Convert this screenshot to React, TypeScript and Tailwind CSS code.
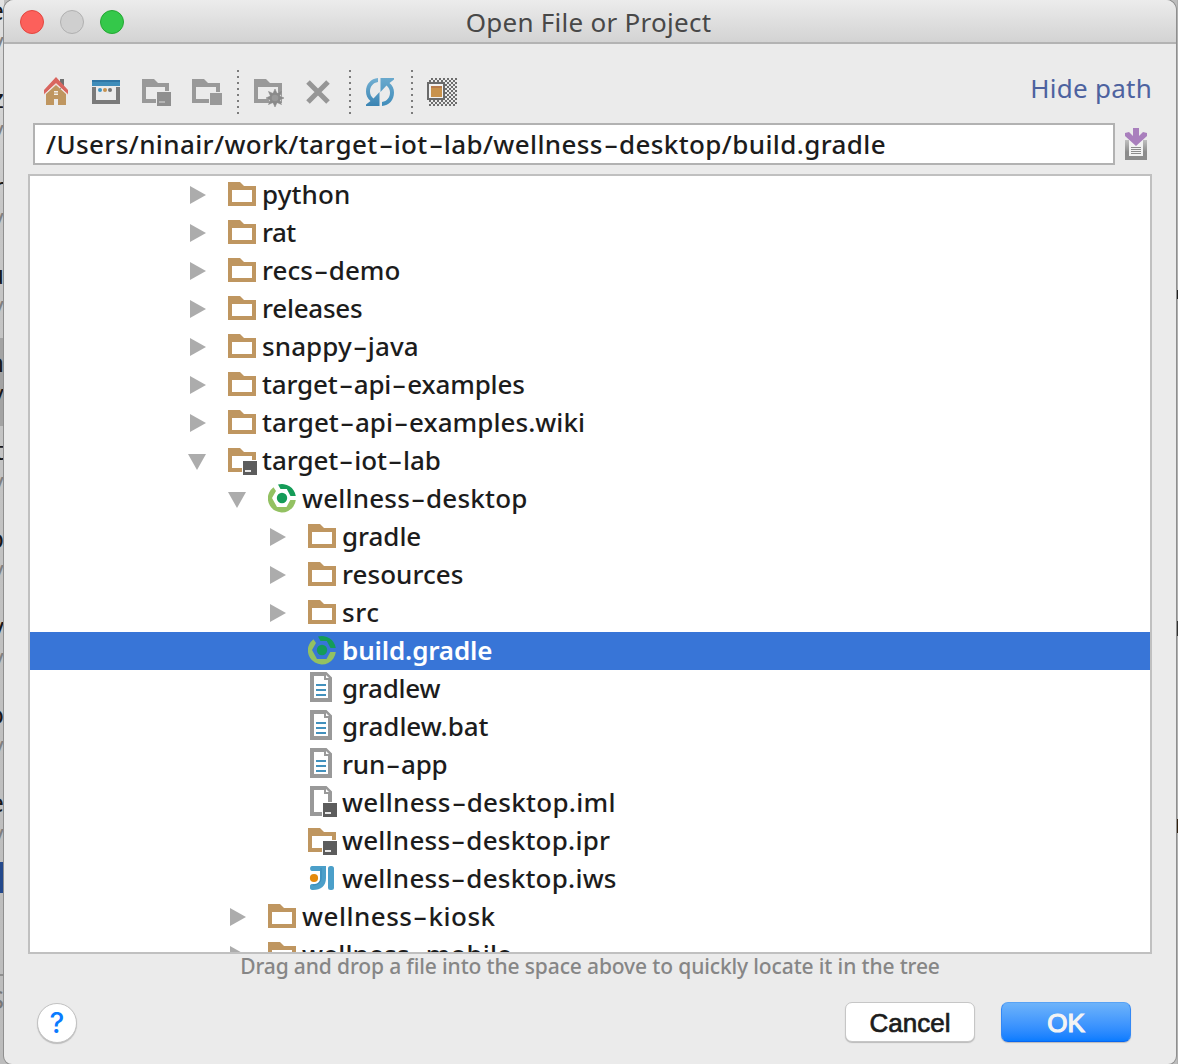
import React from "react";

type IconKind = "folder" | "module" | "gradle" | "file" | "iml" | "ipr" | "iws";
type Arrow = "right" | "down" | "none";
type Row = { name: string; level: 0 | 1 | 2; arrow: Arrow; icon: IconKind; selected?: boolean; track: string };

const rows: Row[] = [
  { name: "python", level: 0, arrow: "right", icon: "folder", track: "tracking-[0.1px]" },
  { name: "rat", level: 0, arrow: "right", icon: "folder", track: "tracking-[-0.6px]" },
  { name: "recs-demo", level: 0, arrow: "right", icon: "folder", track: "tracking-[0px]" },
  { name: "releases", level: 0, arrow: "right", icon: "folder", track: "tracking-[-0.25px]" },
  { name: "snappy-java", level: 0, arrow: "right", icon: "folder", track: "tracking-[0.1px]" },
  { name: "target-api-examples", level: 0, arrow: "right", icon: "folder", track: "tracking-[-0.15px]" },
  { name: "target-api-examples.wiki", level: 0, arrow: "right", icon: "folder", track: "tracking-[0.05px]" },
  { name: "target-iot-lab", level: 0, arrow: "down", icon: "module", track: "tracking-[-0.05px]" },
  { name: "wellness-desktop", level: 1, arrow: "down", icon: "gradle", track: "tracking-[0.2px]" },
  { name: "gradle", level: 2, arrow: "right", icon: "folder", track: "tracking-[-0.05px]" },
  { name: "resources", level: 2, arrow: "right", icon: "folder", track: "tracking-[0.05px]" },
  { name: "src", level: 2, arrow: "right", icon: "folder", track: "tracking-[0.6px]" },
  { name: "build.gradle", level: 2, arrow: "none", icon: "gradle", selected: true, track: "tracking-[-0.15px]" },
  { name: "gradlew", level: 2, arrow: "none", icon: "file", track: "tracking-[-0.25px]" },
  { name: "gradlew.bat", level: 2, arrow: "none", icon: "file", track: "tracking-[-0.05px]" },
  { name: "run-app", level: 2, arrow: "none", icon: "file", track: "tracking-[-0.2px]" },
  { name: "wellness-desktop.iml", level: 2, arrow: "none", icon: "iml", track: "tracking-[0.28px]" },
  { name: "wellness-desktop.ipr", level: 2, arrow: "none", icon: "ipr", track: "tracking-[0.23px]" },
  { name: "wellness-desktop.iws", level: 2, arrow: "none", icon: "iws", track: "tracking-[0.23px]" },
  { name: "wellness-kiosk", level: 1, arrow: "right", icon: "folder", track: "tracking-[0.5px]" },
  { name: "wellness-mobile", level: 1, arrow: "right", icon: "folder", track: "tracking-[0.15px]" },
];

const indent = ["pl-[158px]", "pl-[198px]", "pl-[238px]"];

/* Hyphens are drawn wide, like a short dash. */
function Wide({ text }: { text: string }) {
  return (
    <>
      {text.split(/(-)/).map((part, i) =>
        part === "-" ? (
          <span key={i} className="inline-block w-[16px] scale-x-[1.7] text-center tracking-normal">
            -
          </span>
        ) : (
          part
        )
      )}
    </>
  );
}

const FOLDER = "M0 6H12L16 10H28V30H0ZM4 14V26H24V14Z";

function Badge({ fill = "#5c5c5c" }: { fill?: string }) {
  return (
    <>
      <path d="M14 18H30V34H14Z" fill="#fff" />
      <path d="M15 19H29V33H15Z" fill={fill} />
      <path d="M17 28H23V30H17Z" fill="#e8e8e8" />
    </>
  );
}

function TreeIcon({ kind }: { kind: IconKind }) {
  return (
    <svg className="h-[38px] w-[34px] shrink-0" viewBox="0 0 34 38">
      {(kind === "folder" || kind === "module" || kind === "ipr") && (
        <path d={FOLDER} fill="#bf9660" fillRule="evenodd" />
      )}
      {(kind === "file" || kind === "iml") && (
        <path
          d="M2 2H18.500L24 7.500V32H2ZM6 6V28H20V10H16V6ZM18 5V8H21Z"
          fill="#999"
          fillRule="evenodd"
        />
      )}
      {kind === "file" && <path d="M8 14H18V16H8ZM8 19H18V21H8ZM8 24H18V26H8Z" fill="#4391bd" />}
      {(kind === "module" || kind === "ipr" || kind === "iml") && <Badge />}
      {kind === "gradle" && (
        <g>
          <path d="M5.500 7.200A14 14 0 1 0 27.800 20H22.300L18.500 27H9L4 18L8 11Z" fill="#93c162" />
          <path d="M10 4.600A14 14 0 0 1 27.800 16H22.500L18.800 9H12.500Z" fill="#159c58" />
          <circle cx="14" cy="18" r="5.200" fill="#159c58" />
        </g>
      )}
      {kind === "iws" && (
        <g>
          <path
            d="M4 6H18V18C18 26 13 30 5 30C3.500 30 2 29.500 2 28V26C2 24.600 3 24 5 24C10 24 12 22 12 18V11H4C1.500 11 1.500 6 4 6Z"
            fill="#4b9fc9"
          />
          <path d="M13 8V18C13 22 10 25 5 25" fill="none" stroke="#3789b8" strokeWidth="1" />
          <rect x="20" y="6" width="6" height="24" rx="2.500" fill="#4b9fc9" />
          <circle cx="6" cy="18" r="5" fill="#fff" />
          <circle cx="6" cy="18" r="4.100" fill="#e48a0c" />
        </g>
      )}
    </svg>
  );
}

function ArrowIcon({ arrow }: { arrow: Arrow }) {
  return (
    <svg className="h-[38px] w-[40px] shrink-0" viewBox="0 0 40 38">
      {arrow === "right" && <path d="M2 10L18 19L2 28Z" fill="#acacac" />}
      {arrow === "down" && <path d="M0 12H18L9 28Z" fill="#acacac" />}
    </svg>
  );
}

function TreeRow({ row }: { row: Row }) {
  return (
    <div
      className={`flex h-[38px] shrink-0 items-start ${indent[row.level]} ${
        row.selected ? "bg-[#3875d7] text-white" : "text-[#1c1c1c]"
      }`}
    >
      <ArrowIcon arrow={row.arrow} />
      <TreeIcon kind={row.icon} />
      <span
        className={`whitespace-pre text-[26px] leading-[36px] ${row.track} ${
          row.selected ? "font-semibold" : "font-medium"
        }`}
      >
        <Wide text={row.name} />
      </span>
    </div>
  );
}

function Separator() {
  return (
    <svg className="h-[46px] w-[2px] shrink-0" viewBox="0 0 2 46">
      {[1, 7, 13, 19, 25, 31, 37, 43].map((y) => (
        <rect key={y} x="0" y={y} width="2" height="2" fill="#7c7c7c" />
      ))}
    </svg>
  );
}

function Toolbar() {
  return (
    <div className="flex h-[46px] items-center">
      <svg className="h-[30px] w-[26px]" viewBox="0 0 26 30">
        <path d="M16 2H20V12H16Z" fill="#707070" />
        <path d="M2 17L12 8L22 17V28H14V22H10V28H2Z" fill="#bf9660" />
        <path d="M0 13L12 0L24 13V17.500L12 6.500L0 17.500Z" fill="#d9655f" />
        <path d="M0 17.700L12 6.700L24 17.700" fill="none" stroke="#f4dcd9" strokeWidth="1" />
        <path d="M10 14H14V15.500H10ZM10 16.500H14V18H10Z" fill="#f3efe9" />
      </svg>
      <svg className="ml-[22px] h-[26px] w-[28px]" viewBox="0 0 28 26">
        <path d="M0 1H28V7H0Z" fill="#3f8dba" />
        <path d="M0 1H28V3H0Z" fill="#2f76a5" />
        <path d="M0 8H28V25H0ZM4 8V21H24V8Z" fill="#7a7a7a" fillRule="evenodd" />
        <circle cx="8" cy="11" r="2" fill="#3f96c5" />
        <circle cx="13" cy="11" r="2" fill="#c6924f" />
        <circle cx="18" cy="11" r="2" fill="#757575" />
      </svg>
      <svg className="ml-[22px] h-[30px] w-[30px]" viewBox="0 5 30 30">
        <path d="M0 7H12L16 11H27V31H0ZM4 15V27H23V15Z" fill="#999" fillRule="evenodd" />
        <path d="M14 19H30V35H14Z" fill="#ebebeb" />
        <path d="M15 20H29V34H15Z" fill="#8f8f8f" />
        <path d="M17 29H23V31H17Z" fill="#b4b4b4" />
      </svg>
      <svg className="ml-[20px] h-[30px] w-[30px]" viewBox="0 5 30 30">
        <path d="M0 7H12L16 11H28V31H0ZM4 15V27H24V15Z" fill="#999" fillRule="evenodd" />
        <path d="M17 20H31V34H17Z" fill="#ebebeb" />
        <path d="M18 21H30V33H18Z" fill="#999" />
      </svg>
      <div className="ml-[15px] flex">
        <Separator />
      </div>
      <svg className="ml-[15px] h-[30px] w-[30px]" viewBox="0 5 30 30">
        <path d="M0 7H12L16 11H28V31H0ZM4 15V27H24V15Z" fill="#999" fillRule="evenodd" />
        <circle cx="21" cy="26" r="6.500" fill="#ebebeb" />
        <path
          d="M21 17L23 21.500L27.500 19.500L25.500 24L30 26L25.500 28L27.500 32.500L23 30.500L21 35L19 30.500L14.500 32.500L16.500 28L12 26L16.500 24L14.500 19.500L19 21.500Z"
          fill="#8a8a8a"
          stroke="#8a8a8a"
          strokeWidth="0.600"
        />
        <circle cx="21" cy="26" r="5.300" fill="#8a8a8a" />
        <circle cx="21" cy="26" r="3.300" fill="#999" />
      </svg>
      <svg className="ml-[22px] h-[24px] w-[24px]" viewBox="0 0 24 24">
        <path d="M2 2L22 22M22 2L2 22" stroke="#969696" strokeWidth="5" />
      </svg>
      <div className="ml-[19px] flex">
        <Separator />
      </div>
      <svg className="ml-[15px] h-[28px] w-[28px]" viewBox="0 0 28 28">
        <defs>
          <linearGradient id="syncLeft" x1="0" y1="0" x2="0" y2="1">
            <stop offset="0" stopColor="#74b0d2" />
            <stop offset="1" stopColor="#3a84b3" />
          </linearGradient>
          <linearGradient id="syncRight" x1="0" y1="0" x2="0" y2="1">
            <stop offset="0" stopColor="#69a9cd" />
            <stop offset="1" stopColor="#418dbb" />
          </linearGradient>
        </defs>
        <path
          d="M12 0C5 .5 0 6 0 13.500C0 17.500 1.500 20.500 4.500 23L0 26.500V28H13.500V14L7.500 20.500C5.300 18.500 4 16.500 4 13.500C4 8.500 7 4.800 12 4Z"
          fill="url(#syncLeft)"
        />
        <path
          d="M16 28C23 27.500 28 22 28 14.500C28 10.500 26.500 7.500 23.500 5L28 1.500V0H14.500V14L20.500 7.500C22.700 9.500 24 11.500 24 14.500C24 19.500 21 23.200 16 24Z"
          fill="url(#syncRight)"
        />
      </svg>
      <div className="ml-[17px] flex">
        <Separator />
      </div>
      <svg className="ml-[14px] h-[28px] w-[30px]" viewBox="0 0 30 28">
        <defs>
          <pattern id="checker" width="4" height="4" patternUnits="userSpaceOnUse">
            <path d="M0 0H2V2H0ZM2 2H4V4H2Z" fill="#6e6e6e" />
          </pattern>
        </defs>
        <path d="M2 0H30V28H2Z" fill="url(#checker)" />
        <path d="M0 4H18V22H0Z" fill="#6a6a6a" />
        <path d="M2 6H16V20H2Z" fill="#f2f2f2" />
        <path d="M4 8H15V19H4Z" fill="#c8924c" />
        <path d="M4 8H15V10H4Z" fill="#b77b4b" />
      </svg>
    </div>
  );
}

const behind = ["e", "z", "r", "u", "n", "t", "p", "v", "o", "e"];

function BackdropLeft() {
  return (
    <div className="flex h-full w-[4px] shrink-0 flex-col overflow-hidden bg-gradient-to-b from-[#e2e2e2] via-[#c6c6c6] via-20% to-[#bcbcbc] text-[26px]">
      <div className="-mt-[14px] flex flex-col">
        {behind.map((c, i) => (
          <div key={i} className={`flex h-[88px] flex-col items-end pt-2 ${i === 4 ? "bg-[#a3a3a3]" : ""}`}>
            <span className="h-[32px] leading-[32px] text-[#181818]">{c}</span>
            <span className={`h-[32px] leading-[38px] ${i === 4 ? "text-[#181818]" : "text-[#808080]"}`}>/</span>
          </div>
        ))}
      </div>
      <div className="-mt-[4px] h-[31px] shrink-0 bg-[#24498c]" />
      <div className="mt-[81px] h-[2px] shrink-0 bg-[#8f8f8f]" />
      <div className="flex justify-end pt-1 text-[#777]">S</div>
    </div>
  );
}

export default function App() {
  return (
    <div className="flex h-[1064px] w-[1178px] overflow-hidden bg-[#bdbdbd] font-['Noto_Sans','Open_Sans',sans-serif]">
      <BackdropLeft />
      <div className="flex h-[1064px] w-[1172px] shrink-0 flex-col overflow-hidden rounded-t-[10px] rounded-b-[8px] bg-[#ebebeb] shadow-[0_0_0_1px_#8f8f8f]">
        <div className="relative flex h-[44px] shrink-0 items-center justify-center border-b-2 border-[#b3b3b3] bg-gradient-to-b from-[#ececec] to-[#d3d3d3]">
          <div className="absolute left-[16px] top-[10px] flex gap-[16px]">
            <span className="size-[24px] rounded-full border border-[#e2463f] bg-[#fc605b]" />
            <span className="size-[24px] rounded-full border border-[#b0b0b0] bg-[#cfcfcf]" />
            <span className="size-[24px] rounded-full border border-[#24a733] bg-[#34c84a]" />
          </div>
          <span className="pr-[3px] pt-[2px] text-[26px] leading-[40px] tracking-[0.27px] text-[#484848]">
            Open File or Project
          </span>
        </div>

        <div className="flex h-[79px] shrink-0 justify-between pl-[40px] pr-[24px]">
          <div className="pt-[25px]">
            <Toolbar />
          </div>
          <span className="pt-[24px] text-[26px] leading-[40px] tracking-[0.25px] text-[#4d629f]">Hide path</span>
        </div>

        <div className="flex h-[42px] shrink-0 items-center pl-[29px]">
          <div className="flex h-[42px] w-[1082px] items-center border-2 border-[#b2b2b2] bg-white pl-[11px] text-[26px] font-medium leading-[38px] tracking-[0.39px] text-[#1c1c1c]">
            <span className="whitespace-pre">
              <Wide text="/Users/ninair/work/target-iot-lab/wellness-desktop/build.gradle" />
            </span>
          </div>
          <svg className="ml-[10px] h-[32px] w-[22px]" viewBox="0 0 22 32">
            <defs>
              <linearGradient id="tray" x1="0" y1="10" x2="0" y2="24" gradientUnits="userSpaceOnUse">
                <stop offset="0" stopColor="#c8c8c8" />
                <stop offset="1" stopColor="#8c8c8c" />
              </linearGradient>
            </defs>
            <path d="M0 12H22V32H0ZM4 12V28H18V12Z" fill="url(#tray)" fillRule="evenodd" />
            <path d="M4 12H18V28H4Z" fill="#f2f2f2" />
            <path d="M6 19.500H16M6 21.500H16M6 23.500H16M6 25.500H16" stroke="#8c8c8c" />
            <path d="M8 0H14V8L18 4L22 5V8L11 18L0 8V5L4 4L8 8Z" fill="#a97fbd" />
          </svg>
        </div>

        <div className="ml-[24px] mt-[9px] flex h-[780px] w-[1124px] shrink-0 flex-col overflow-hidden border-2 border-[#c0c0c0] bg-white">
          {rows.map((row) => (
            <TreeRow key={row.name} row={row} />
          ))}
        </div>

        <div className="flex h-[26px] shrink-0 justify-center text-[21px] font-medium leading-[25px] tracking-[-0.13px] text-[#868686]">
          <span>Drag and drop a file into the space above to quickly locate it in the tree</span>
        </div>

        <div className="mt-[22px] flex h-[40px] shrink-0 items-center pl-[33px] pr-[45px] font-['Liberation_Sans',sans-serif]">
          <button className="mt-[2px] flex size-[40px] items-center justify-center rounded-full border border-[#c2c2c2] bg-white font-['Inter',sans-serif] text-[28px] font-medium text-[#0a7bff] shadow-[0_1px_1px_#bbb]">
            ?
          </button>
          <button className="ml-auto h-[40px] w-[130px] rounded-[7px] border border-[#c6c6c6] bg-white text-[26px] leading-[40px] text-[#1c1c1c] shadow-[0_1px_1px_#bbb] [-webkit-text-stroke:0.7px_#1c1c1c]">
            Cancel
          </button>
          <button className="ml-[26px] h-[40px] w-[130px] rounded-[7px] border border-t-[#58a3f5] border-x-[#3388f5] border-b-[#0866f0] bg-gradient-to-b from-[#6db3fa] to-[#087cff] text-[26px] leading-[40px] text-[#f4f4f4] shadow-[0_1px_1px_#bbb] [-webkit-text-stroke:1.2px_#f4f4f4]">
            OK
          </button>
        </div>
      </div>
      <div className="ml-[1px] flex w-px flex-col bg-[#b0b0b0]">
        <span className="mt-[290px] h-[9px] bg-[#222]" />
        <span className="mt-[322px] h-[15px] bg-[#333]" />
        <span className="mt-[183px] h-[14px] bg-[#332211]" />
      </div>
    </div>
  );
}
